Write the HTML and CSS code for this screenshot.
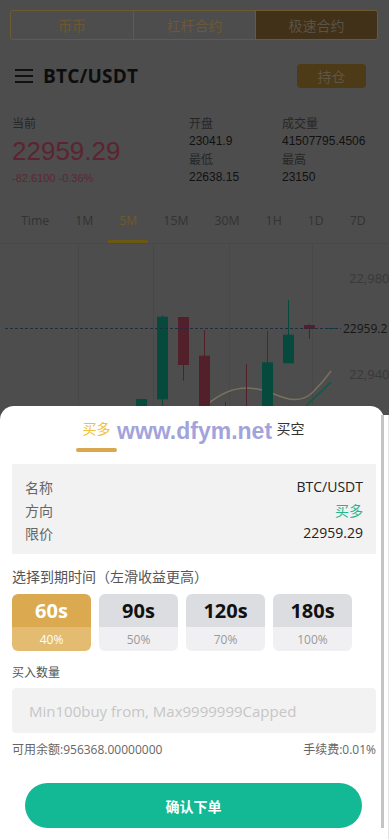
FILE: index.html
```html
<!DOCTYPE html>
<html lang="zh-CN">
<head>
<meta charset="utf-8">
<meta name="viewport" content="width=device-width, initial-scale=1">
<title>极速合约</title>
<link rel="stylesheet" href="styles.css">
</head>
<body>
<div class="page">
  <div class="mode-tabs">
    <div class="mode-tab">币币</div>
    <div class="mode-tab">杠杆合约</div>
    <div class="mode-tab active">极速合约</div>
  </div>

  <div class="header">
    <div class="title">
      <svg class="menu-icon" width="18" height="16" viewBox="0 0 18 16">
        <path d="M0 2h18M0 8h18M0 14h18" stroke="#111" stroke-width="2" fill="none"/>
      </svg>
      <span class="pair">BTC/USDT</span>
    </div>
    <div class="hold-btn">持仓</div>
  </div>

  <div class="quote">
    <div class="q-col">
      <div class="q-label">当前</div>
      <div class="q-price">22959.29</div>
      <div class="q-change">-82.6100 -0.36%</div>
    </div>
    <div class="q-col">
      <div class="q-label">开盘</div>
      <div class="q-val">23041.9</div>
      <div class="q-label">最低</div>
      <div class="q-val">22638.15</div>
    </div>
    <div class="q-col">
      <div class="q-label">成交量</div>
      <div class="q-val">41507795.4506</div>
      <div class="q-label">最高</div>
      <div class="q-val">23150</div>
    </div>
  </div>

  <div class="intervals">
    <div class="iv"><span>Time</span><i></i></div>
    <div class="iv"><span>1M</span><i></i></div>
    <div class="iv active"><span>5M</span><i></i></div>
    <div class="iv"><span>15M</span><i></i></div>
    <div class="iv"><span>30M</span><i></i></div>
    <div class="iv"><span>1H</span><i></i></div>
    <div class="iv"><span>1D</span><i></i></div>
    <div class="iv"><span>7D</span><i></i></div>
  </div>

  <div class="chart">
    <svg width="389" height="170" viewBox="0 0 389 170">
      <g class="grid">
        <line x1="78.5" y1="0" x2="78.5" y2="170"/>
        <line x1="153.5" y1="0" x2="153.5" y2="170"/>
        <line x1="229.5" y1="0" x2="229.5" y2="170"/>
        <line x1="312.5" y1="0" x2="312.5" y2="170"/>
      </g>
      <path class="ma-slow" d="M205,162 C220,150 232,144 247,144 C262,144 272,150 285,154 C295,157 305,156 313,148 C320,141 326,134 331,127"/>
      <path class="ma-fast" d="M305,163 L331,138"/>
      <g class="up">
        <rect x="136" y="155" width="11" height="20"/>
        <line x1="162.5" y1="71" x2="162.5" y2="170"/>
        <rect x="157" y="72.7" width="11" height="82.6"/>
        <line x1="225.5" y1="158" x2="225.5" y2="170"/>
        <line x1="267.5" y1="86.7" x2="267.5" y2="170"/>
        <rect x="262" y="118.3" width="11" height="55"/>
        <line x1="288.5" y1="56" x2="288.5" y2="91"/>
        <rect x="283" y="90.7" width="11" height="28.6"/>
        <line x1="326" y1="84.5" x2="335" y2="84.5"/>
      </g>
      <g class="down">
        <line x1="183.5" y1="73" x2="183.5" y2="136.7"/>
        <rect x="178" y="73" width="11" height="48"/>
        <line x1="204.5" y1="86" x2="204.5" y2="112"/>
        <rect x="199" y="111.7" width="11" height="60"/>
        <line x1="246.5" y1="120" x2="246.5" y2="170"/>
        <line x1="309.5" y1="80" x2="309.5" y2="95"/>
        <rect x="304" y="81" width="11" height="4"/>
      </g>
      <line class="last-line" x1="5" y1="84.5" x2="341" y2="84.5"/>
      <text class="axis" x="349" y="39">22,980</text>
      <text class="axis" x="349" y="135">22,940</text>
      <text class="axis-now" x="343" y="89">22959.2</text>
    </svg>
  </div>
</div>

<div class="sheet">
  <div class="panel">
    <div class="dir-tabs">
      <div class="dir active"><span>买多</span><i></i></div>
      <div class="watermark">www.dfym.net</div>
      <div class="dir"><span>买空</span><i></i></div>
    </div>

    <div class="info">
      <div class="info-row"><span class="k">名称</span><span class="v">BTC/USDT</span></div>
      <div class="info-row"><span class="k">方向</span><span class="v up">买多</span></div>
      <div class="info-row"><span class="k">限价</span><span class="v">22959.29</span></div>
    </div>

    <div class="section-title">选择到期时间（左滑收益更高）</div>
    <div class="options">
      <div class="opt active"><div class="opt-time">60s</div><div class="opt-rate">40%</div></div>
      <div class="opt"><div class="opt-time">90s</div><div class="opt-rate">50%</div></div>
      <div class="opt"><div class="opt-time">120s</div><div class="opt-rate">70%</div></div>
      <div class="opt"><div class="opt-time">180s</div><div class="opt-rate">100%</div></div>
    </div>

    <div class="field-label">买入数量</div>
    <input class="amount" type="text" placeholder="Min100buy from, Max9999999Capped">

    <div class="balance-row">
      <span>可用余额:956368.00000000</span>
      <span>手续费:0.01%</span>
    </div>

    <button class="confirm" type="button">确认下单</button>
    <div class="thumb"></div>
  </div>
  <div class="track"></div>
</div>
</body>
</html>
```

FILE: styles.css
```css
* { box-sizing: border-box; }
html, body { margin: 0; padding: 0; }
html { background: #4d4d4d; }
body {
  width: 389px;
  height: 839px;
  overflow: hidden;
  background: #4d4d4d;
  font-family: "Open Sans", "Noto Sans CJK SC", sans-serif;
  color: #111;
}

/* page behind the modal sheet, in its dimmed colours */
.page {
  background: #4d4d4d;
  height: 839px;
  padding-top: 10px;
}

/* mode tabs */
.mode-tabs {
  margin: 0 11px 0 10px;
  height: 30px;
  display: grid;
  grid-template-columns: 1fr 1fr 1fr;
  border: 1px solid #6e5a30;
  border-radius: 3px;
  overflow: hidden;
}
.mode-tab {
  display: flex;
  align-items: center;
  justify-content: center;
  font-family: "Noto Sans CJK SC", sans-serif;
  font-size: 14px;
  color: #6c5833;
  border-left: 1px solid #6e5a30;
}
.mode-tab:first-child { border-left: none; }
.mode-tab.active { background: #403118; color: #5a5347; }

/* header */
.header {
  margin-top: 24px;
  height: 24px;
  padding: 0 23px 0 15px;
  display: flex;
  align-items: center;
  justify-content: space-between;
}
.title { display: flex; align-items: center; }
.menu-icon { display: block; margin-right: 10px; }
.pair { font-size: 19px; font-weight: 700; letter-spacing: 0.2px; color: #0d0d0d; }
.hold-btn {
  width: 69px;
  height: 24px;
  border-radius: 4px;
  background: #4d3a17;
  color: #5e5648;
  font-family: "Noto Sans CJK SC", sans-serif;
  font-size: 14px;
  display: flex;
  align-items: center;
  justify-content: center;
}

/* quote */
.quote {
  margin-top: 26px;
  padding-left: 12px;
  display: grid;
  grid-template-columns: 177px 93px 1fr;
  font-family: "Liberation Sans", "Noto Sans CJK SC", sans-serif;
}
.q-col { display: flex; flex-direction: column; }
.q-label { font-size: 12px; line-height: 18px; color: #262626; font-family: "Noto Sans CJK SC", sans-serif; }
.q-val { font-size: 12px; line-height: 18px; color: #111; }
.q-price { font-size: 26px; line-height: 30px; margin-top: 4px; color: #5c2431; }
.q-change { font-size: 11px; line-height: 16px; margin-top: 4px; color: #5c2833; }

/* intervals */
.intervals {
  margin-top: 18px;
  padding: 8px 0 0 10px;
  display: flex;
  gap: 4px;
  border-bottom: 1px solid #484848;
}
.iv {
  display: flex;
  flex-direction: column;
  align-items: stretch;
}
.iv span {
  display: block;
  padding: 0 11px;
  font-size: 12.3px;
  line-height: 18px;
  color: #333;
  text-align: center;
}
.iv i { display: block; height: 3px; margin-top: 10px; }
.iv.active span { color: #6e5a28; }
.iv.active i { background: #6b5812; }

/* chart */
.chart { height: 170px; overflow: hidden; }
.chart svg { display: block; }
.grid line { stroke: #484848; stroke-width: 1; }
.ma-slow { stroke: #77725c; stroke-width: 1.5; fill: none; }
.ma-fast { stroke: #0c5a4c; stroke-width: 1.5; fill: none; }
.up rect { fill: #054a3d; }
.up line { stroke: #054a3d; stroke-width: 1; }
.down rect { fill: #52202a; }
.down line { stroke: #52202a; stroke-width: 1; }
.last-line { stroke: #1e2c44; stroke-width: 1; stroke-dasharray: 3 2; }
.axis { font-family: "Open Sans", sans-serif; font-size: 13px; fill: #393939; }
.axis-now { font-family: "Open Sans", sans-serif; font-size: 12px; fill: #161616; }

/* sheet */
.sheet {
  position: fixed;
  left: 0;
  bottom: 0;
  width: 100%;
  height: 433px;
  display: flex;
  z-index: 10;
}
.panel {
  position: relative;
  flex: 1;
  background: #fff;
  border-radius: 14px 14px 0 0;
  padding: 0 8px 0 12px;
  display: flex;
  flex-direction: column;
}
.track {
  position: relative;
  width: 5px;
  margin-top: 9px;
  background: #fff;
  border-right: 1px solid #e4e4e4;
}
.thumb {
  position: absolute;
  right: 0;
  top: 9px;
  bottom: 11px;
  width: 3px;
  background: #c4c4c4;
}

.dir-tabs {
  padding: 12px 0 0 64px;
  display: flex;
  align-items: flex-start;
}
.dir { width: 41px; flex-shrink: 0; display: flex; flex-direction: column; align-items: center; }
.dir span {
  font-family: "Noto Sans CJK SC", sans-serif;
  font-size: 14px;
  line-height: 20px;
  color: #333;
}
.dir i { display: block; width: 41px; height: 4px; margin-top: 10px; border-radius: 2px; }
.dir.active span { color: #f0c040; }
.dir.active i { background: #d9a84e; }
.watermark {
  width: 153px;
  flex-shrink: 0;
  text-align: center;
  font-family: "Liberation Sans", sans-serif;
  font-weight: 700;
  font-size: 23px;
  line-height: 26px;
  color: #a3a3dc;
  white-space: nowrap;
}

.info {
  margin-top: 12px;
  background: #f2f2f2;
  padding: 11px 13px 10px;
}
.info-row {
  height: 23px;
  display: flex;
  align-items: center;
  justify-content: space-between;
  font-size: 14px;
}
.info-row .k { color: #666; font-family: "Noto Sans CJK SC", sans-serif; }
.info-row .v { color: #222; }
.info-row .v.up { color: #1fb892; font-family: "Noto Sans CJK SC", sans-serif; }

.section-title {
  margin-top: 12px;
  font-family: "Noto Sans CJK SC", sans-serif;
  font-size: 14px;
  line-height: 20px;
  color: #555;
}

.options {
  margin-top: 8px;
  display: flex;
  gap: 8px;
}
.opt {
  width: 79px;
  height: 57px;
  border-radius: 6px;
  overflow: hidden;
  display: flex;
  flex-direction: column;
}
.opt-time {
  height: 33px;
  background: #dcdde1;
  display: flex;
  align-items: center;
  justify-content: center;
  font-size: 20px;
  font-weight: 700;
  color: #111;
}
.opt-rate {
  flex: 1;
  background: #f0f0f2;
  display: flex;
  align-items: center;
  justify-content: center;
  font-size: 12px;
  color: #999;
}
.opt.active .opt-time { background: #dba94f; color: #fff; }
.opt.active .opt-rate { background: #e3bb71; color: #fff; }

.field-label {
  margin-top: 12px;
  font-family: "Noto Sans CJK SC", sans-serif;
  font-size: 12px;
  line-height: 18px;
  color: #555;
}

.amount {
  margin-top: 7px;
  height: 45px;
  width: 100%;
  border: none;
  outline: none;
  border-radius: 4px;
  background: #f2f2f2;
  padding: 0 17px;
  font-family: "Open Sans", sans-serif;
  font-size: 15px;
  color: #333;
}
.amount::placeholder { color: #c6c6c6; }

.balance-row {
  margin-top: 8px;
  display: flex;
  justify-content: space-between;
  font-family: "Open Sans", "Noto Sans CJK SC", sans-serif;
  font-size: 12px;
  line-height: 18px;
  color: #666;
}

.confirm {
  margin: 24px 14px 0 13px;
  height: 45px;
  border: none;
  border-radius: 23px;
  background: #13b894;
  color: #fff;
  font-family: "Noto Sans CJK SC", sans-serif;
  font-size: 14px;
  font-weight: 700;
}
```
